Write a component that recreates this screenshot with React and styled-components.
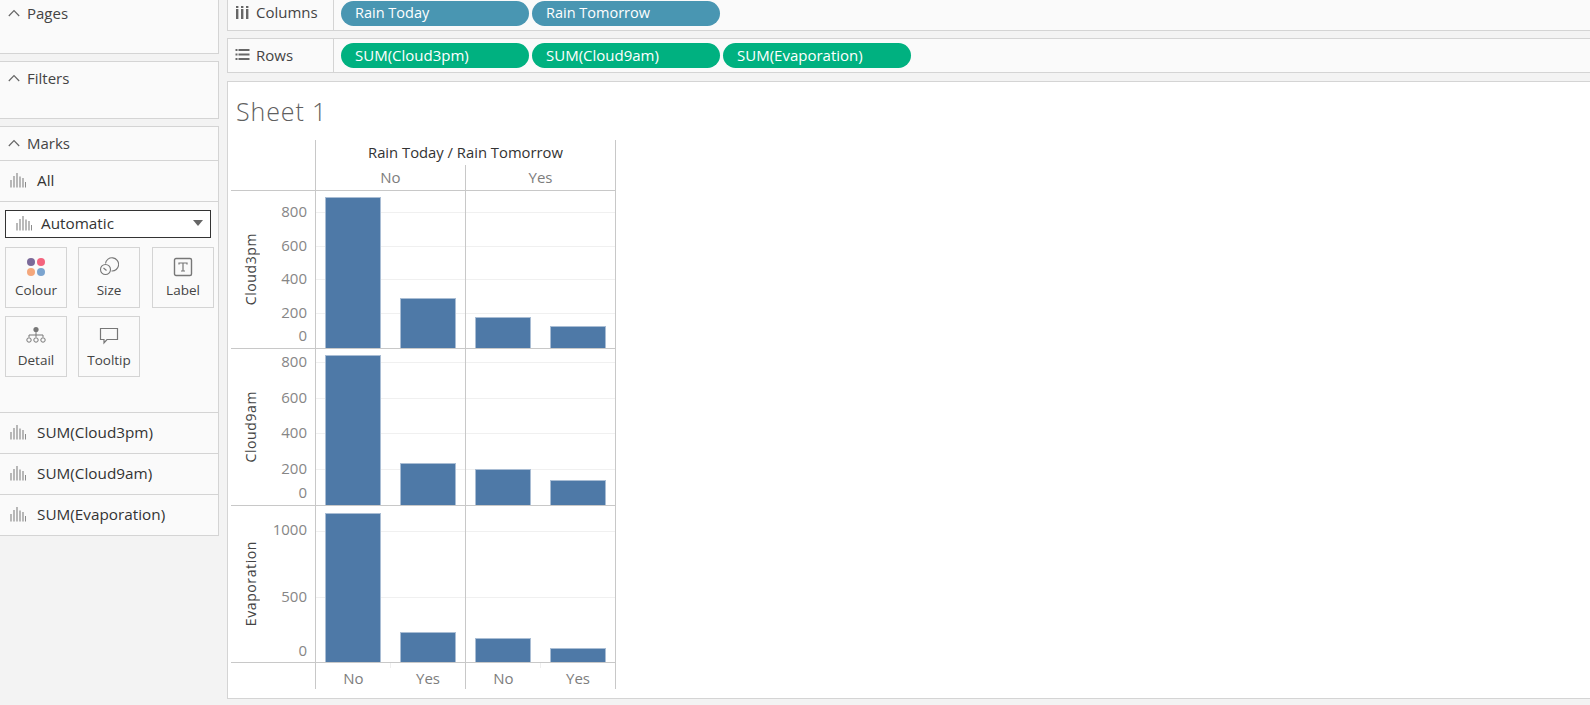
import React from 'react'
import styled, { createGlobalStyle } from 'styled-components'

const GlobalStyle = createGlobalStyle`
  html, body { margin: 0; padding: 0; background: #f3f3f3; }
  body { font-family: "Open Sans", Roboto, sans-serif; color: #333; }
`

const LINE = '#d4d4d4'
const AXIS = '#c8c8c8'

const Page = styled.div`
  display: flex;
  width: 1590px;
  height: 705px;
  overflow: hidden;
  background: #f3f3f3;
`

const Sidebar = styled.aside`
  width: 219px;
  flex: none;
  display: flex;
  flex-direction: column;
  gap: 7px;
`

const Card = styled.section`
  background: #fafafa;
  border: 1px solid ${LINE};
  border-left: 0;
  height: ${p => p.$height}px;
  box-sizing: border-box;
  ${p => p.$first && 'border-top: 0;'}
`

const CardHead = styled.div`
  display: flex;
  align-items: center;
  gap: 7px;
  height: ${p => p.$height || 31}px;
  padding: 0 0 ${p => (p.$height ? 0 : 2)}px 8px;
  font-size: 15px;
  color: #444;
`

const MarkRow = styled.div`
  display: flex;
  align-items: center;
  gap: 11px;
  height: 38px;
  padding: 0 0 2px 10px;
  border-top: 1px solid ${LINE};
  font-size: 15.3px;
`

const DropdownRow = styled.div`
  border-top: 1px solid ${LINE};
`

const Dropdown = styled.div`
  display: flex;
  align-items: center;
  gap: 9px;
  height: 28px;
  margin: 8px 7px 0 5px;
  padding: 0 7px 2px 10px;
  box-sizing: border-box;
  background: #fff;
  border: 1px solid #333;
  font-size: 15.3px;
`

const Caret = styled.span`
  margin-left: auto;
  width: 0;
  height: 0;
  border-left: 5px solid transparent;
  border-right: 5px solid transparent;
  border-top: 6px solid #666;
`

const MarkButtons = styled.div`
  display: grid;
  grid-template-columns: 73px 74px 62px;
  grid-auto-rows: 61px;
  row-gap: 8px;
  height: 174px;
  padding: 9px 0 0 5px;
  box-sizing: border-box;
`

const MarkButton = styled.div`
  width: 62px;
  height: 61px;
  box-sizing: border-box;
  border: 1px solid ${LINE};
  display: flex;
  flex-direction: column;
  align-items: center;
  padding-top: 9px;
  font-size: 13.5px;
  line-height: 18px;
  color: #444;
  svg { display: block; margin-bottom: ${p => p.$gap}px; }
`

const Main = styled.main`
  flex: 1;
  min-width: 0;
  display: flex;
  flex-direction: column;
  padding: 0 0 6px 8px;
`

const Shelf = styled.div`
  display: flex;
  flex: none;
  height: ${p => p.$height}px;
  margin-bottom: ${p => p.$gap}px;
  box-sizing: border-box;
  background: #fafafa;
  border: 1px solid ${LINE};
  border-right: 0;
  ${p => p.$first && 'border-top: 0;'}
`

const ShelfLabel = styled.div`
  width: 106px;
  box-sizing: border-box;
  flex: none;
  display: flex;
  align-items: center;
  gap: 6px;
  padding: 0 0 ${p => p.$lift || 0}px 7px;
  border-right: 1px solid ${LINE};
  font-size: 15px;
  color: #444;
`

const PillRow = styled.div`
  display: flex;
  align-items: flex-start;
  gap: 3px;
  padding: ${p => p.$top}px 0 0 7px;
`

const Pill = styled.div`
  width: 188px;
  height: 25px;
  box-sizing: border-box;
  padding: 0 0 2px 14px;
  display: flex;
  align-items: center;
  border-radius: 13px;
  color: #fff;
  font-size: ${p => (p.$kind === 'measure' ? 15 : 14.5)}px;
  background: ${p => (p.$kind === 'measure' ? '#00b180' : '#4996b2')};
`

const Sheet = styled.div`
  flex: 1;
  background: #fff;
  border: 1px solid ${LINE};
  border-right: 0;
  padding-left: 3px;
`

const SheetTitle = styled.h1`
  margin: 0;
  height: 58px;
  padding: 13px 0 0 5px;
  box-sizing: border-box;
  font-size: 25px;
  line-height: 32px;
  font-weight: 300;
  letter-spacing: 0.9px;
  color: #5f5f5f;
`

const Crosstab = styled.div`
  display: grid;
  grid-template-columns: 84px 150px 151px;
  grid-template-rows: 25px 25px 158px 157px 157px 27px;
  width: 385px;
`

const Corner = styled.div`
  grid-row: span 2;
`

const HeadTitle = styled.div`
  grid-column: span 2;
  display: flex;
  align-items: center;
  justify-content: center;
  padding-bottom: 2px;
  border-left: 1px solid ${AXIS};
  border-right: 1px solid ${AXIS};
  font-size: 14.8px;
`

const HeadCell = styled.div`
  display: flex;
  align-items: center;
  justify-content: center;
  padding-bottom: 2px;
  border-left: 1px solid ${AXIS};
  ${p => p.$last && `border-right: 1px solid ${AXIS};`}
  font-size: 15px;
  color: #7d7d7d;
`

const AxisCell = styled.div`
  position: relative;
  display: flex;
  align-items: center;
  padding-left: 10px;
  border-top: 1px solid ${AXIS};
`

const AxisTitle = styled.div`
  writing-mode: vertical-rl;
  transform: rotate(180deg);
  font-size: 14px;
  letter-spacing: 0.6px;
  color: #444;
`

const Tick = styled.span`
  position: absolute;
  right: 8px;
  transform: translateY(calc(50% - 1px));
  font-size: 15px;
  line-height: 16px;
  color: #868686;
`

const Facet = styled.div`
  position: relative;
  display: flex;
  align-items: flex-end;
  gap: 19px;
  padding-left: 9px;
  border-top: 1px solid ${AXIS};
  border-left: 1px solid ${AXIS};
  ${p => p.$last && `border-right: 1px solid ${AXIS};`}
`

const GridLine = styled.div`
  position: absolute;
  left: 0;
  right: 0;
  height: 1px;
  background: #f0f0f0;
`

const Bar = styled.div`
  position: relative;
  width: 56px;
  box-sizing: border-box;
  background: #4e79a7;
  border: 1px solid #a9bdd4;
  border-bottom: 0;
`

const FootSpacer = styled.div`
  border-top: 1px solid ${AXIS};
`

const FootCell = styled.div`
  display: grid;
  grid-template-columns: 75px 74px;
  border-top: 1px solid ${AXIS};
  border-left: 1px solid ${AXIS};
  ${p => p.$last && `border-right: 1px solid ${AXIS};`}
`

const FootLabel = styled.div`
  display: flex;
  align-items: center;
  justify-content: center;
  padding-top: 4px;
  font-size: 15px;
  color: #7d7d7d;
  ${p => p.$tick && `
    position: relative;
    &::after {
      content: '';
      position: absolute;
      top: 0;
      right: 0;
      width: 1px;
      height: 5px;
      background: #eee;
    }
  `}
`

const Chevron = () => (
  <svg width="12" height="8" viewBox="0 0 12 8" fill="none" stroke="#666" strokeWidth="1.2">
    <path d="M0.8 7 L6 1.6 L11.2 7" />
  </svg>
)

const BarsIcon = () => (
  <svg width="16" height="16" viewBox="0 0 16 16" stroke="#8c8c8c" strokeWidth="1.2">
    <path d="M1 15.5V8M4 15.5V4M7 15.5V1M10 15.5V4.5M13 15.5V6M15.6 15.5V10" />
  </svg>
)

const ColumnsIcon = () => (
  <svg width="15" height="15" viewBox="0 0 15 15" fill="#666">
    <rect x="1" y="1" width="2.4" height="2" />
    <rect x="1" y="4" width="2.4" height="10" />
    <rect x="6" y="1" width="2.4" height="2" />
    <rect x="6" y="4" width="2.4" height="10" />
    <rect x="11" y="1" width="2.4" height="2" />
    <rect x="11" y="4" width="2.4" height="10" />
  </svg>
)

const RowsIcon = () => (
  <svg width="15" height="15" viewBox="0 0 15 15" fill="#666">
    <rect x="0.5" y="2" width="2" height="2" />
    <rect x="3.5" y="2" width="11" height="2" />
    <rect x="0.5" y="6.5" width="2" height="2" />
    <rect x="3.5" y="6.5" width="11" height="2" />
    <rect x="0.5" y="11" width="2" height="2" />
    <rect x="3.5" y="11" width="11" height="2" />
  </svg>
)

const ColourIcon = () => (
  <svg width="20" height="20" viewBox="0 0 20 20">
    <circle cx="5" cy="5" r="4" fill="#7b6a99" />
    <circle cx="15" cy="5" r="4" fill="#f4647e" />
    <circle cx="5" cy="15" r="4" fill="#f4a77c" />
    <circle cx="15" cy="15" r="4" fill="#7ba4cf" />
  </svg>
)

const SizeIcon = () => (
  <svg width="20" height="20" viewBox="0 0 20 20" fill="none" stroke="#777" strokeWidth="1.1">
    <path d="M6.5 6.5 A6.6 6.6 0 1 1 12.5 14" />
    <circle cx="6.5" cy="12.5" r="5" fill="#fafafa" />
    <path d="M4.5 11 L7.5 13.5" />
  </svg>
)

const LabelIcon = () => (
  <svg width="20" height="20" viewBox="0 0 20 20" fill="none" stroke="#777">
    <rect x="1.5" y="1.5" width="17" height="17" rx="1.5" strokeWidth="1.4" />
    <path d="M6 7.5V6H14V7.5M10 6V14M8 14H12" strokeWidth="1.2" />
  </svg>
)

const DetailIcon = () => (
  <svg width="20" height="20" viewBox="0 0 20 20" fill="none" stroke="#777" strokeWidth="1">
    <circle cx="10" cy="3.5" r="2.6" fill="#777" stroke="none" />
    <path d="M10 6V11M3 11V9H17V11" />
    <circle cx="3" cy="14" r="2.2" />
    <circle cx="10" cy="14" r="2.2" />
    <circle cx="17" cy="14" r="2.2" />
  </svg>
)

const TooltipIcon = () => (
  <svg width="20" height="20" viewBox="0 0 20 20" fill="none" stroke="#777" strokeWidth="1.2">
    <path d="M1.5 2.5H18.5V13.5H8L5 17V13.5H1.5Z" />
  </svg>
)

const markButtons = [
  { label: 'Colour', Icon: ColourIcon, gap: 4 },
  { label: 'Size', Icon: SizeIcon, gap: 4 },
  { label: 'Label', Icon: LabelIcon, gap: 4 },
  { label: 'Detail', Icon: DetailIcon, gap: 5 },
  { label: 'Tooltip', Icon: TooltipIcon, gap: 5 },
]

// y values are px above the bottom of the pane
const panes = [
  {
    title: 'Cloud3pm',
    bars: [[151, 50], [31, 22]],
    ticks: [
      { label: '800', grid: 135, y: 136 },
      { label: '600', grid: 101, y: 102 },
      { label: '400', grid: 68, y: 69 },
      { label: '200', grid: 34, y: 35 },
      { label: '0', y: 12 },
    ],
  },
  {
    title: 'Cloud9am',
    bars: [[150, 42], [36, 25]],
    ticks: [
      { label: '800', grid: 142, y: 143 },
      { label: '600', grid: 106, y: 107 },
      { label: '400', grid: 71, y: 72 },
      { label: '200', grid: 35, y: 36 },
      { label: '0', y: 12 },
    ],
  },
  {
    title: 'Evaporation',
    bars: [[149, 30], [24, 14]],
    ticks: [
      { label: '1000', grid: 130, y: 132 },
      { label: '500', grid: 64, y: 65 },
      { label: '0', y: 11 },
    ],
  },
]

const App = () => {
  return (
    <Page>
      <GlobalStyle />
      <Sidebar>
        <Card $first $height={54}>
          <CardHead $height={26}><Chevron />Pages</CardHead>
        </Card>
        <Card $height={58}>
          <CardHead><Chevron />Filters</CardHead>
        </Card>
        <Card $height={410}>
          <CardHead><Chevron />Marks</CardHead>
          <MarkRow><BarsIcon />All</MarkRow>
          <DropdownRow>
            <Dropdown><BarsIcon />Automatic<Caret /></Dropdown>
          </DropdownRow>
          <MarkButtons>
            {markButtons.map(({ label, Icon, gap }) => (
              <MarkButton key={label} $gap={gap}><Icon />{label}</MarkButton>
            ))}
          </MarkButtons>
          <MarkRow><BarsIcon />SUM(Cloud3pm)</MarkRow>
          <MarkRow><BarsIcon />SUM(Cloud9am)</MarkRow>
          <MarkRow><BarsIcon />SUM(Evaporation)</MarkRow>
        </Card>
      </Sidebar>

      <Main>
        <Shelf $first $height={31} $gap={7}>
          <ShelfLabel $lift={6}><ColumnsIcon />Columns</ShelfLabel>
          <PillRow $top={1}>
            <Pill>Rain Today</Pill>
            <Pill>Rain Tomorrow</Pill>
          </PillRow>
        </Shelf>
        <Shelf $height={35} $gap={8}>
          <ShelfLabel $lift={2}><RowsIcon />Rows</ShelfLabel>
          <PillRow $top={4}>
            <Pill $kind="measure">SUM(Cloud3pm)</Pill>
            <Pill $kind="measure">SUM(Cloud9am)</Pill>
            <Pill $kind="measure">SUM(Evaporation)</Pill>
          </PillRow>
        </Shelf>
        <Sheet>
          <SheetTitle>Sheet 1</SheetTitle>
          <Crosstab>
            <Corner />
            <HeadTitle>Rain Today / Rain Tomorrow</HeadTitle>
            <HeadCell>No</HeadCell>
            <HeadCell $last>Yes</HeadCell>

            {panes.map(pane => (
              <React.Fragment key={pane.title}>
                <AxisCell>
                  <AxisTitle>{pane.title}</AxisTitle>
                  {pane.ticks.map(t => (
                    <Tick key={t.label} style={{ bottom: t.y }}>{t.label}</Tick>
                  ))}
                </AxisCell>
                {pane.bars.map((pair, i) => (
                  <Facet key={i} $last={i === 1}>
                    {pane.ticks.filter(t => t.grid).map(t => (
                      <GridLine key={t.label} style={{ bottom: t.grid }} />
                    ))}
                    {pair.map((h, j) => (
                      <Bar key={j} style={{ height: h }} />
                    ))}
                  </Facet>
                ))}
              </React.Fragment>
            ))}

            <FootSpacer />
            <FootCell>
              <FootLabel $tick>No</FootLabel>
              <FootLabel>Yes</FootLabel>
            </FootCell>
            <FootCell $last>
              <FootLabel $tick>No</FootLabel>
              <FootLabel>Yes</FootLabel>
            </FootCell>
          </Crosstab>
        </Sheet>
      </Main>
    </Page>
  )
}

export default App
